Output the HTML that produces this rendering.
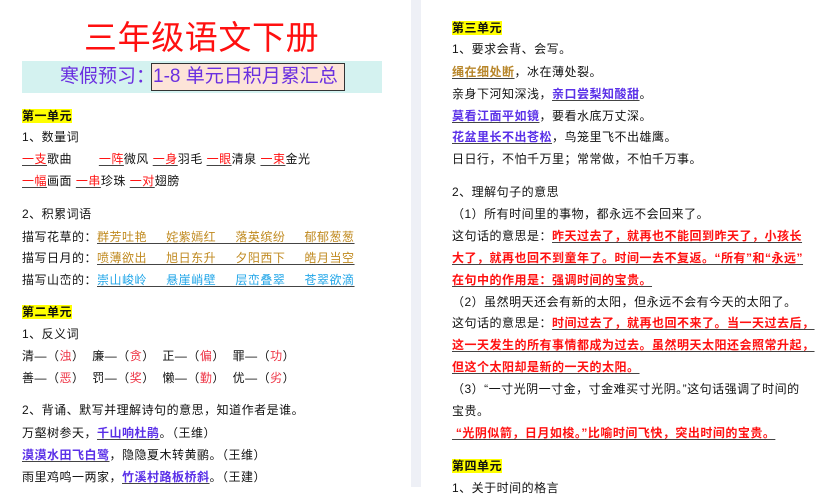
<!DOCTYPE html>
<html><head><meta charset="utf-8"><style>
*{margin:0;padding:0}
body{width:833px;height:487px;overflow:hidden;background:#fff;position:relative;font-family:"Liberation Sans","Noto Sans CJK SC",sans-serif;font-size:12px;letter-spacing:0.5px;color:#111}
.gap{position:absolute;left:411px;top:0;width:10px;height:487px;background:#eef0f6}
.l{position:absolute;white-space:nowrap;line-height:16px}
.y{background:#ffff00;font-weight:bold}
.u{text-decoration:underline;text-decoration-color:#444;text-decoration-thickness:1px;text-underline-offset:2px}
.r{color:#ff1010}.rb{color:#ff1010;font-weight:bold}
.o{color:#c08a20}.b{color:#22a6e8}.p{color:#5a30e8;font-weight:bold}.pk{color:#ee3344}
.ob{color:#b8862a;font-weight:bold}
</style></head><body>
<div class="gap"></div>
<div class="l" style="left:84px;top:17px;font-size:33px;letter-spacing:0.6px;line-height:42px;color:#ff1010">三年级语文下册</div>
<div style="position:absolute;left:22px;top:61px;width:360px;height:32px;background:#d4f2f0"></div>
<div class="l" style="left:60px;top:66px;font-size:19px;letter-spacing:0;line-height:22px;color:#6a2fe0">寒假预习：</div>
<div style="position:absolute;left:151px;top:63px;width:192px;height:26px;background:#fde4d8;border:1px solid #333"></div>
<div class="l" style="left:153px;top:66px;font-size:19px;letter-spacing:0;line-height:22px;color:#6a2fe0">1-8 单元日积月累汇总</div>

<div class="l" style="left:22px;top:108px"><span class="y">第一单元</span></div>
<div class="l" style="left:22px;top:129px">1、数量词</div>
<div class="l" style="left:22px;top:151px"><span class="u r">一支</span>歌曲&nbsp;&nbsp;&nbsp;&nbsp;&nbsp;&nbsp; <span class="u r">一阵</span>微风 <span class="u r">一身</span>羽毛 <span class="u r">一眼</span>清泉 <span class="u r">一束</span>金光</div>
<div class="l" style="left:22px;top:173px"><span class="u r">一幅</span>画面 <span class="u r">一串</span>珍珠 <span class="u r">一对</span>翅膀</div>
<div class="l" style="left:22px;top:206px">2、积累词语</div>
<div class="l" style="left:22px;top:229px">描写花草的：<span class="u o">群芳吐艳&nbsp;&nbsp;&nbsp;&nbsp; 姹紫嫣红&nbsp;&nbsp;&nbsp;&nbsp; 落英缤纷&nbsp;&nbsp;&nbsp;&nbsp; 郁郁葱葱</span></div>
<div class="l" style="left:22px;top:250px">描写日月的：<span class="u o">喷薄欲出&nbsp;&nbsp;&nbsp;&nbsp; 旭日东升&nbsp;&nbsp;&nbsp;&nbsp; 夕阳西下&nbsp;&nbsp;&nbsp;&nbsp; 皓月当空</span></div>
<div class="l" style="left:22px;top:272px">描写山峦的：<span class="u b">崇山峻岭&nbsp;&nbsp;&nbsp;&nbsp; 悬崖峭壁&nbsp;&nbsp;&nbsp;&nbsp; 层峦叠翠&nbsp;&nbsp;&nbsp;&nbsp; 苍翠欲滴</span></div>
<div class="l" style="left:22px;top:304px"><span class="y">第二单元</span></div>
<div class="l" style="left:22px;top:326px">1、反义词</div>
<div class="l" style="left:22px;top:348px">清—（<span class="pk">浊</span>）&nbsp; 廉—（<span class="pk">贪</span>）&nbsp; 正—（<span class="pk">偏</span>）&nbsp; 罪—（<span class="pk">功</span>）</div>
<div class="l" style="left:22px;top:370px">善—（<span class="pk">恶</span>）&nbsp; 罚—（<span class="pk">奖</span>）&nbsp; 懒—（<span class="pk">勤</span>）&nbsp; 优—（<span class="pk">劣</span>）</div>
<div class="l" style="left:22px;top:402px">2、背诵、默写并理解诗句的意思，知道作者是谁。</div>
<div class="l" style="left:22px;top:425px">万壑树参天，<span class="u p">千山响杜鹃</span>。（王维）</div>
<div class="l" style="left:22px;top:447px"><span class="u p">漠漠水田飞白鹭</span>，隐隐夏木转黄鹂。（王维）</div>
<div class="l" style="left:22px;top:469px">雨里鸡鸣一两家，<span class="u p">竹溪村路板桥斜</span>。（王建）</div>

<div class="l" style="left:452px;top:20px"><span class="y">第三单元</span></div>
<div class="l" style="left:452px;top:41px">1、要求会背、会写。</div>
<div class="l" style="left:452px;top:64px"><span class="u ob">绳在细处断</span>，冰在薄处裂。</div>
<div class="l" style="left:452px;top:86px">亲身下河知深浅，<span class="u p">亲口尝梨知酸甜</span>。</div>
<div class="l" style="left:452px;top:108px"><span class="u p">莫看江面平如镜</span>，要看水底万丈深。</div>
<div class="l" style="left:452px;top:129px"><span class="u p">花盆里长不出苍松</span>，鸟笼里飞不出雄鹰。</div>
<div class="l" style="left:452px;top:151px">日日行，不怕千万里；常常做，不怕千万事。</div>
<div class="l" style="left:452px;top:184px">2、理解句子的意思</div>
<div class="l" style="left:452px;top:206px">（1）所有时间里的事物，都永远不会回来了。</div>
<div class="l" style="left:452px;top:228px">这句话的意思是：<span class="u rb">昨天过去了，就再也不能回到昨天了，小孩长</span></div>
<div class="l" style="left:452px;top:250px"><span class="u rb">大了，就再也回不到童年了。时间一去不复返。“所有”和“永远”</span></div>
<div class="l" style="left:452px;top:272px"><span class="u rb">在句中的作用是：强调时间的宝贵。</span></div>
<div class="l" style="left:452px;top:294px">（2）虽然明天还会有新的太阳，但永远不会有今天的太阳了。</div>
<div class="l" style="left:452px;top:315px">这句话的意思是：<span class="u rb">时间过去了，就再也回不来了。当一天过去后，</span></div>
<div class="l" style="left:452px;top:337px"><span class="u rb">这一天发生的所有事情都成为过去。虽然明天太阳还会照常升起，</span></div>
<div class="l" style="left:452px;top:359px"><span class="u rb">但这个太阳却是新的一天的太阳。</span></div>
<div class="l" style="left:452px;top:381px">（3）“一寸光阴一寸金，寸金难买寸光阴。”这句话强调了时间的</div>
<div class="l" style="left:452px;top:403px">宝贵。</div>
<div class="l" style="left:452px;top:425px"><span class="u rb">&nbsp;“光阴似箭，日月如梭。”比喻时间飞快，突出时间的宝贵。</span></div>
<div class="l" style="left:452px;top:458px"><span class="y">第四单元</span></div>
<div class="l" style="left:452px;top:480px">1、关于时间的格言</div>
</body></html>
